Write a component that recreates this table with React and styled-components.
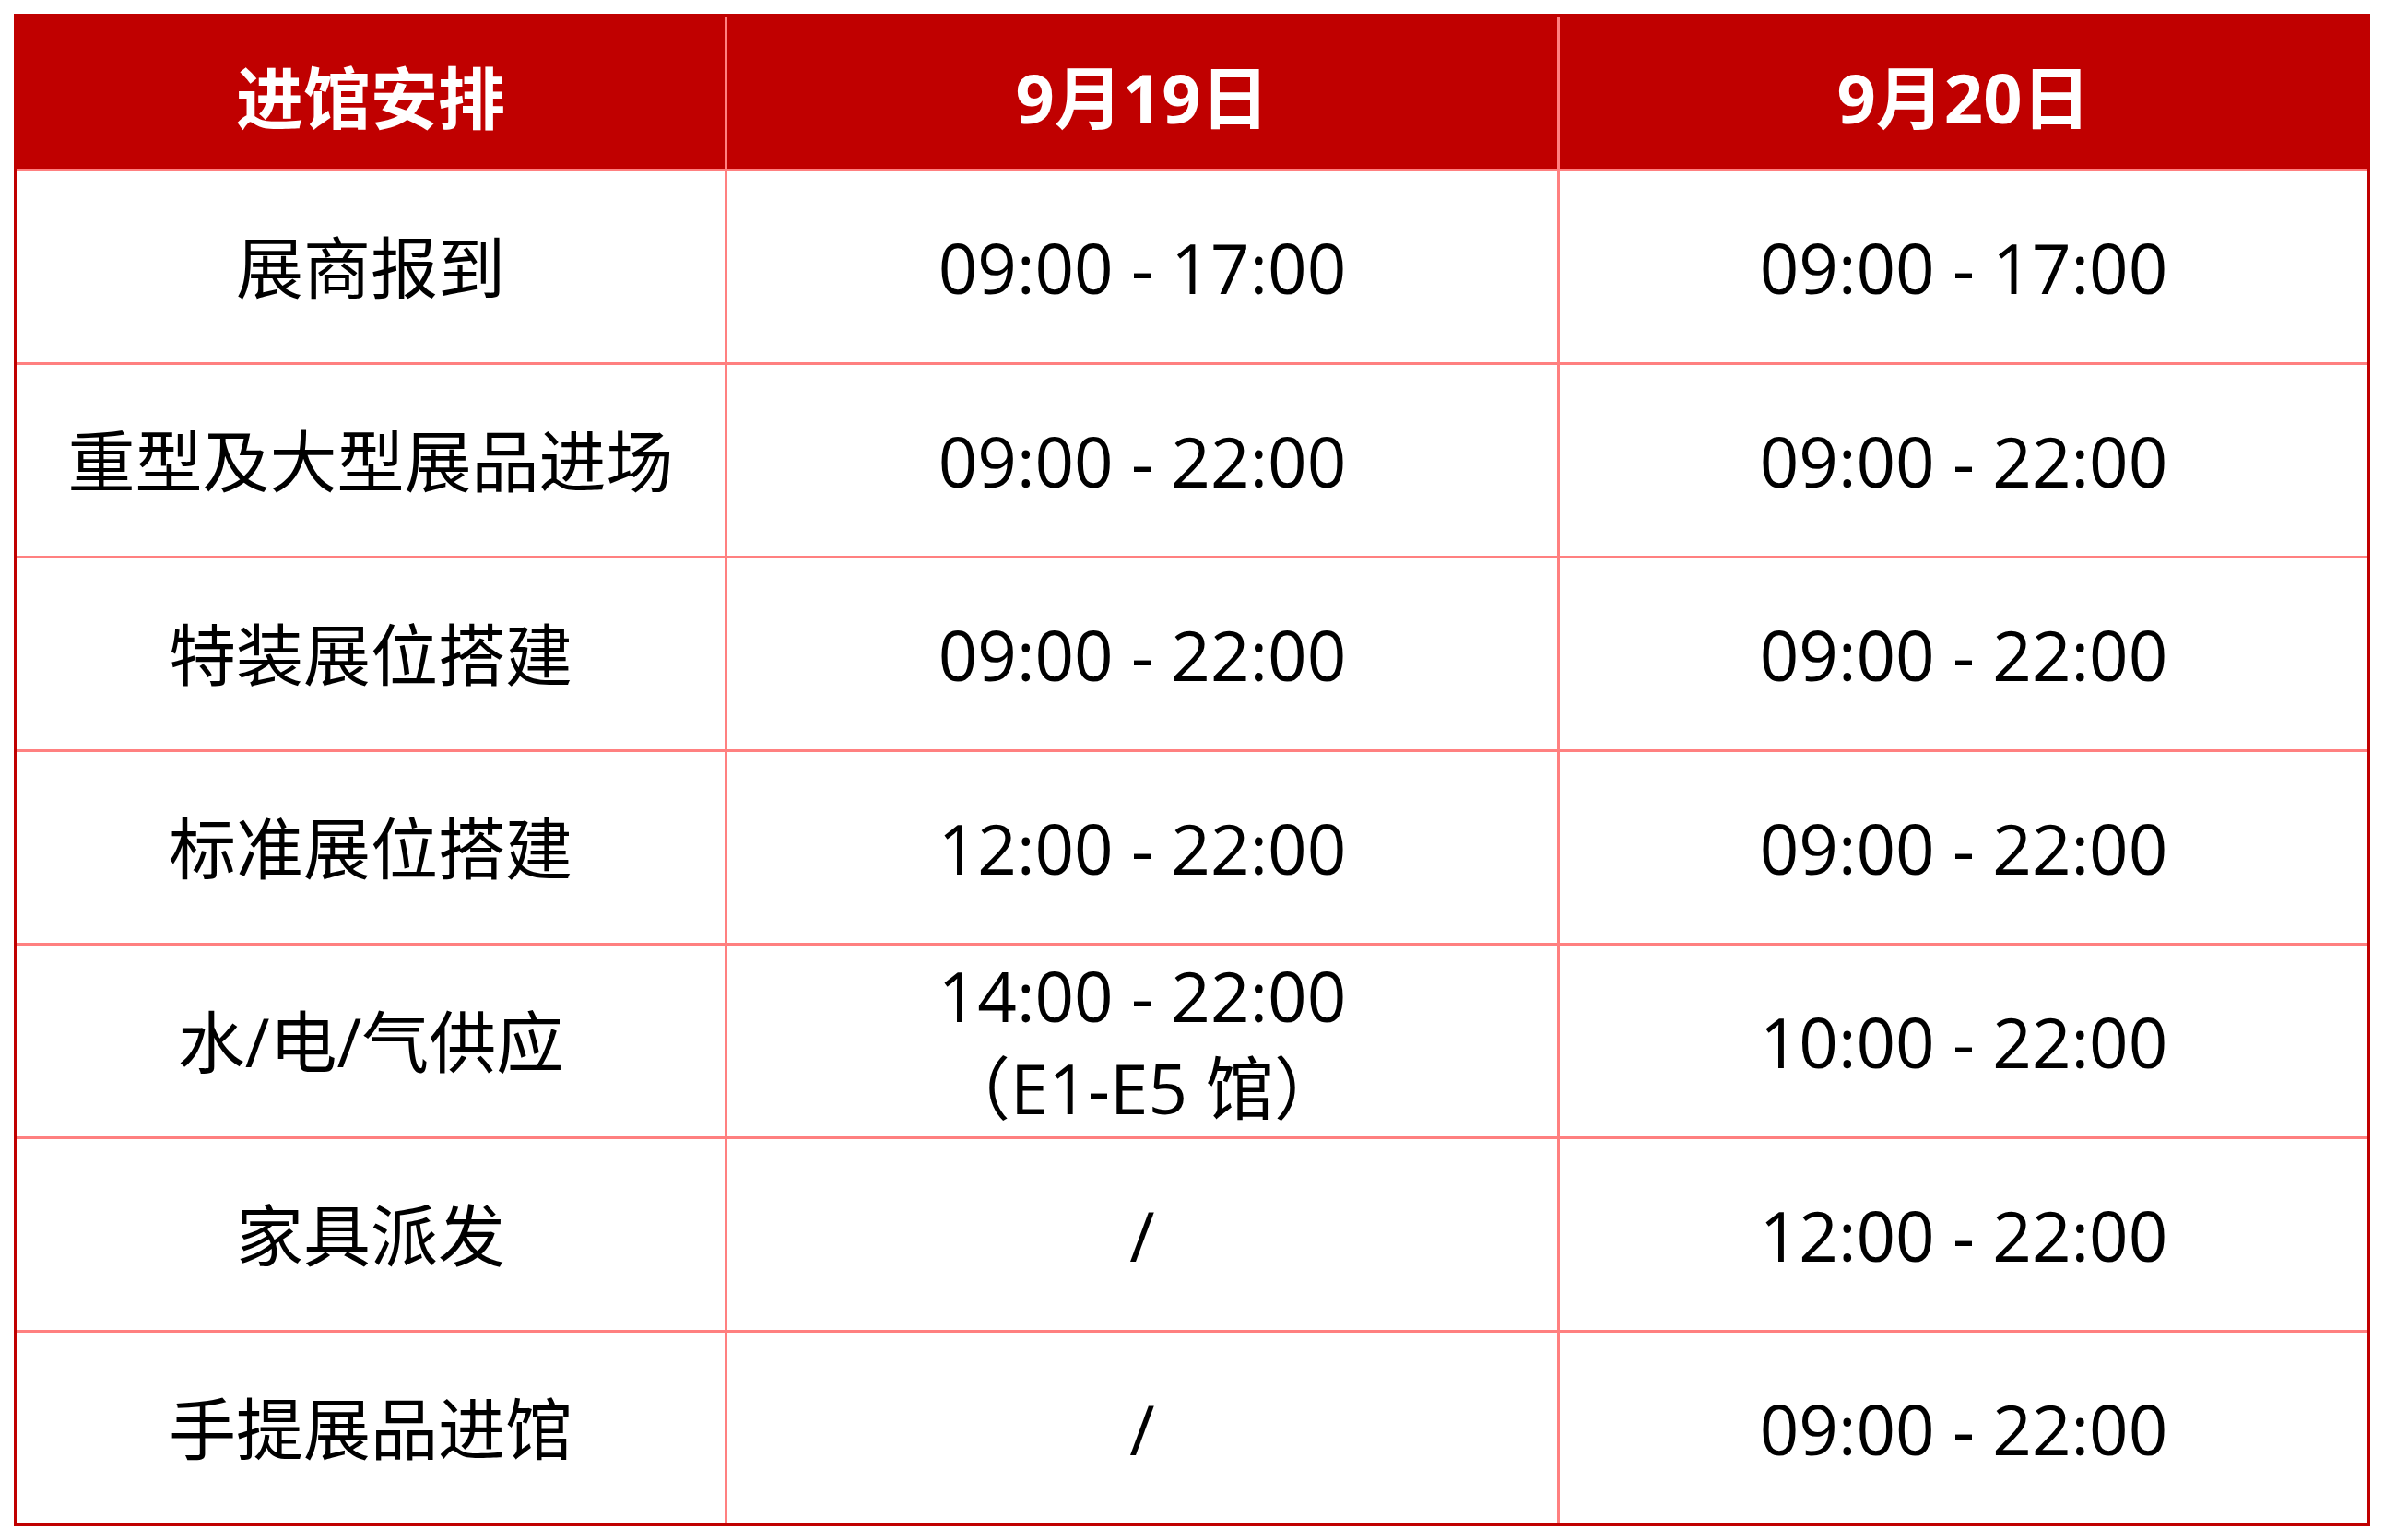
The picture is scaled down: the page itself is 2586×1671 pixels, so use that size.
import React from "react";
import styled, { createGlobalStyle } from "styled-components";

const GlobalStyle = createGlobalStyle`
  html, body {
    margin: 0;
    padding: 0;
    background: #ffffff;
  }
  body {
    font-family: "Open Sans", "Noto Sans CJK SC", sans-serif;
  }
`;

const Page = styled.div`
  padding: 15px;
`;

const Table = styled.table`
  width: 2556px;
  border: 3px solid #c00000;
  border-collapse: separate;
  border-spacing: 0;
  table-layout: fixed;
  font-family: "Open Sans", "Noto Sans CJK SC", sans-serif;
  font-size: 73px;
  color: #000000;
`;

const HeadCell = styled.th`
  height: 162px;
  padding: 3px 0 0;
  background: #c00000;
  color: #ffffff;
  font-weight: 700;
  font-size: ${({ $first }) => ($first ? "73px" : "74px")};
  text-align: center;
  vertical-align: middle;
  border-left: ${({ $first }) => ($first ? "none" : "3px solid #ff8080")};
`;

const Cell = styled.td`
  height: 207px;
  padding: 0;
  text-align: center;
  vertical-align: middle;
  font-weight: 400;
  font-size: ${({ $first }) => ($first ? "73px" : "74.5px")};
  line-height: 100px;
  border-top: 3px solid #ff8080;
  border-left: ${({ $first }) => ($first ? "none" : "3px solid #ff8080")};
`;

const Line = styled.div`
  white-space: nowrap;
`;

const columns = [
  { title: "进馆安排", width: 768 },
  { title: "9月19日", width: 903 },
  { title: "9月20日", width: 879 },
];

const rows = [
  ["展商报到", ["09:00 - 17:00"], ["09:00 - 17:00"]],
  ["重型及大型展品进场", ["09:00 - 22:00"], ["09:00 - 22:00"]],
  ["特装展位搭建", ["09:00 - 22:00"], ["09:00 - 22:00"]],
  ["标准展位搭建", ["12:00 - 22:00"], ["09:00 - 22:00"]],
  ["水/电/气供应", ["14:00 - 22:00", "（E1-E5 馆）"], ["10:00 - 22:00"]],
  ["家具派发", ["/"], ["12:00 - 22:00"]],
  ["手提展品进馆", ["/"], ["09:00 - 22:00"]],
];

export default function App() {
  return (
    <>
      <GlobalStyle />
      <Page>
        <Table>
          <colgroup>
            {columns.map((c) => (
              <col key={c.title} style={{ width: c.width }} />
            ))}
          </colgroup>
          <thead>
            <tr>
              {columns.map((c, i) => (
                <HeadCell key={c.title} $first={i === 0}>
                  {c.title}
                </HeadCell>
              ))}
            </tr>
          </thead>
          <tbody>
            {rows.map(([label, day1, day2]) => (
              <tr key={label}>
                <Cell $first>{label}</Cell>
                <Cell>
                  {day1.map((t) => (
                    <Line key={t}>{t}</Line>
                  ))}
                </Cell>
                <Cell>
                  {day2.map((t) => (
                    <Line key={t}>{t}</Line>
                  ))}
                </Cell>
              </tr>
            ))}
          </tbody>
        </Table>
      </Page>
    </>
  );
}
